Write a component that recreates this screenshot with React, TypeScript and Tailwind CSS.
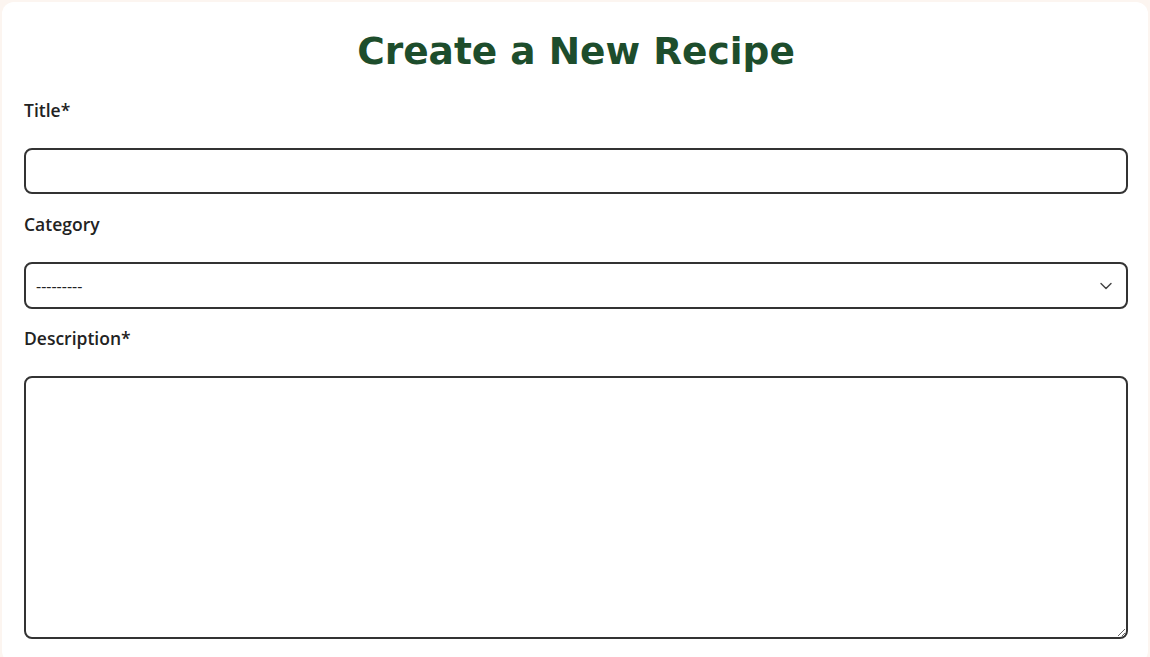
import { ChevronDown } from "lucide-react";

export default function App() {
  return (
    <div className="min-h-screen bg-[#fcf5f0] px-[2px] pt-[2px]">
      {/* Card */}
      <div className="rounded-[12px] bg-white pl-[22px] pr-[20px] pt-[26px] pb-6">
        <h1 className="mb-[23px] text-center text-[37.5px] font-bold leading-[46px] text-[#1d4d2c] [font-family:'DejaVu_Sans',sans-serif]">
          Create a New Recipe
        </h1>

        <form className="[font-family:'Open_Sans',sans-serif]">
          <label htmlFor="title" className="mb-[25px] block text-[17.5px] font-semibold leading-[26px] text-[#222]">
            Title*
          </label>
          <input
            id="title"
            type="text"
            className="mb-[17px] block h-[46px] w-full rounded-[8px] border-2 border-[#333] bg-white px-[10px] text-base outline-none"
          />

          <label htmlFor="category" className="mb-[25px] block text-[17.5px] font-semibold leading-[26px] text-[#222]">
            Category
          </label>
          <div className="relative mb-[16px]">
            <select
              id="category"
              defaultValue=""
              className="block h-[47px] w-full appearance-none rounded-[8px] border-2 border-[#333] bg-white pl-[10px] pr-10 text-base text-[#222] outline-none"
            >
              <option value="">---------</option>
              <option value="1">Breakfast</option>
              <option value="2">Lunch</option>
              <option value="3">Dinner</option>
              <option value="4">Dessert</option>
            </select>
            <ChevronDown
              size={20}
              strokeWidth={1.7}
              className="pointer-events-none absolute right-[12px] top-1/2 -translate-y-1/2 text-[#444]"
            />
          </div>

          <label htmlFor="description" className="mb-[25px] block text-[17.5px] font-semibold leading-[26px] text-[#222]">
            Description*
          </label>
          <textarea
            id="description"
            className="block h-[263px] w-full rounded-[8px] border-2 border-[#333] bg-white p-[10px] text-base outline-none"
          />
        </form>
      </div>
    </div>
  );
}
